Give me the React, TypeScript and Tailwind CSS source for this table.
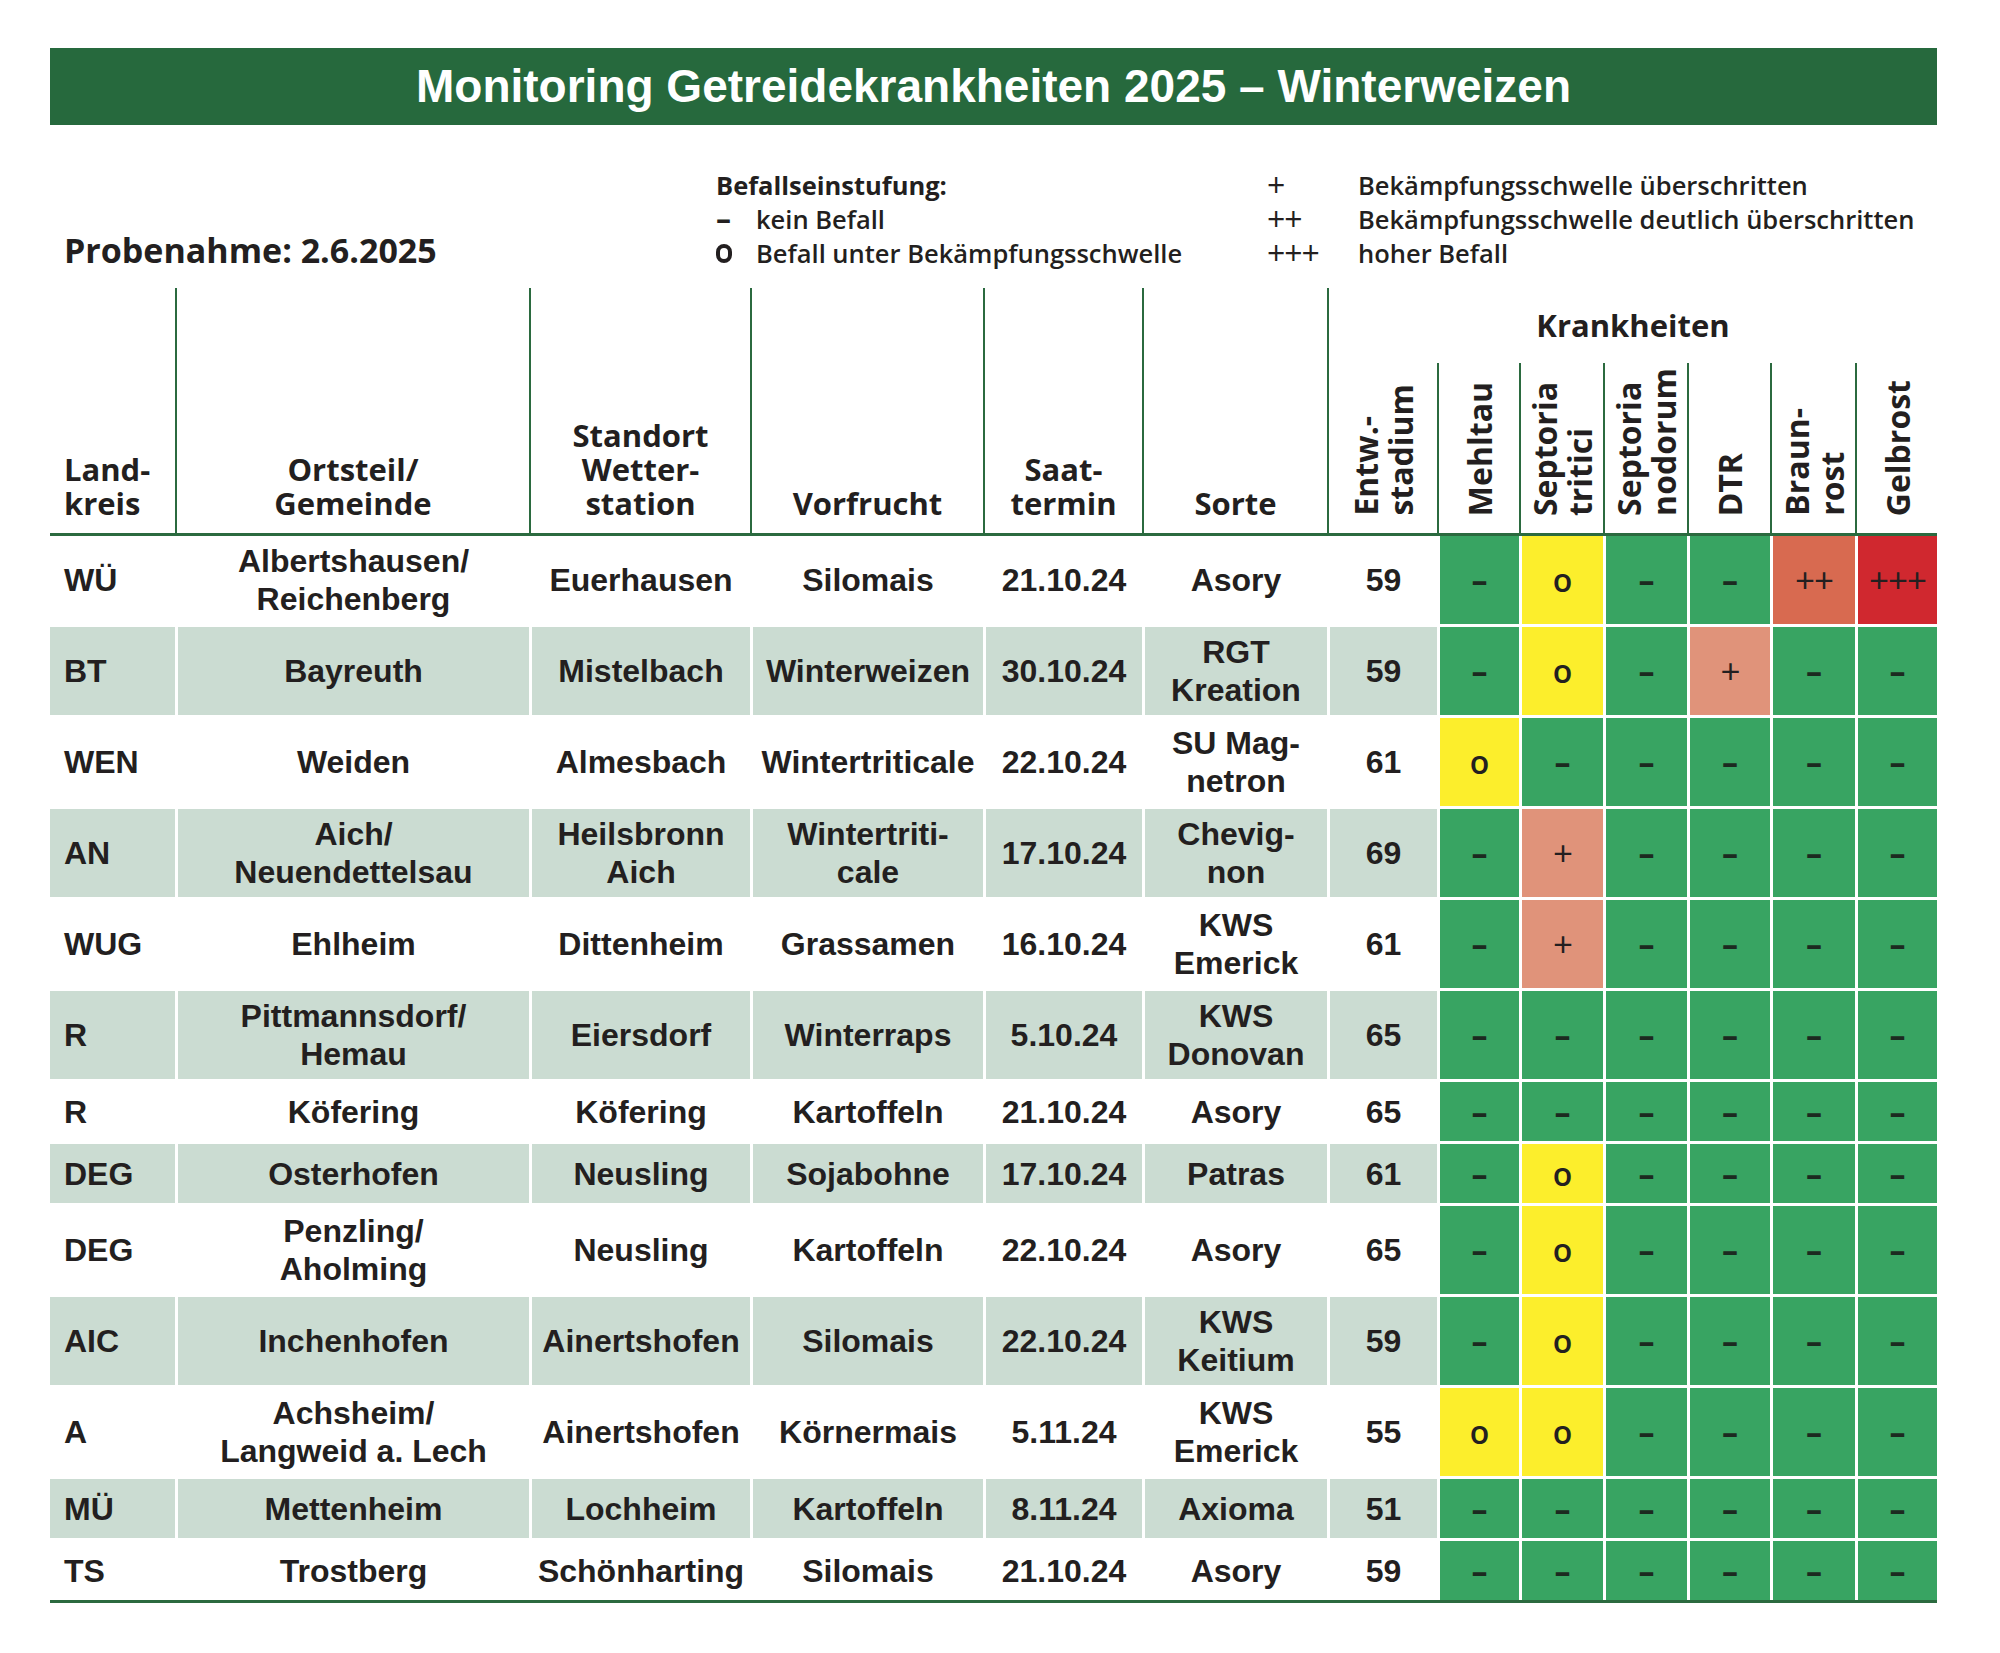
import React from 'react';

const LIB = "[font-family:'Liberation_Sans',Arial,sans-serif]";
const OS = "[font-family:'Open_Sans',sans-serif]";

// column widths, left to right (border-box, left border included)
const W = [
  'w-[125px]',
  'w-[354px]',
  'w-[221px]',
  'w-[233px]',
  'w-[159px]',
  'w-[185px]',
  'w-[110px]',
  'w-[82px]',
  'w-[84px]',
  'w-[84px]',
  'w-[83px]',
  'w-[85px]',
  'w-[82px]',
];

type Row = {
  lk: string;
  ort: string;
  st: string;
  vf: string;
  saat: string;
  sorte: string;
  entw: string;
  d: string[];
  tall: boolean;
};

const none = ['-', '-', '-', '-', '-', '-'];

const rows: Row[] = [
  { lk: 'WÜ', ort: 'Albertshausen/|Reichenberg', st: 'Euerhausen', vf: 'Silomais', saat: '21.10.24', sorte: 'Asory', entw: '59', d: ['-', 'o', '-', '-', '++', '+++'], tall: true },
  { lk: 'BT', ort: 'Bayreuth', st: 'Mistelbach', vf: 'Winterweizen', saat: '30.10.24', sorte: 'RGT|Kreation', entw: '59', d: ['-', 'o', '-', '+', '-', '-'], tall: true },
  { lk: 'WEN', ort: 'Weiden', st: 'Almesbach', vf: 'Wintertriticale', saat: '22.10.24', sorte: 'SU Mag-|netron', entw: '61', d: ['o', '-', '-', '-', '-', '-'], tall: true },
  { lk: 'AN', ort: 'Aich/|Neuendettelsau', st: 'Heilsbronn|Aich', vf: 'Wintertriti-|cale', saat: '17.10.24', sorte: 'Chevig-|non', entw: '69', d: ['-', '+', '-', '-', '-', '-'], tall: true },
  { lk: 'WUG', ort: 'Ehlheim', st: 'Dittenheim', vf: 'Grassamen', saat: '16.10.24', sorte: 'KWS|Emerick', entw: '61', d: ['-', '+', '-', '-', '-', '-'], tall: true },
  { lk: 'R', ort: 'Pittmannsdorf/|Hemau', st: 'Eiersdorf', vf: 'Winterraps', saat: '5.10.24', sorte: 'KWS|Donovan', entw: '65', d: none, tall: true },
  { lk: 'R', ort: 'Köfering', st: 'Köfering', vf: 'Kartoffeln', saat: '21.10.24', sorte: 'Asory', entw: '65', d: none, tall: false },
  { lk: 'DEG', ort: 'Osterhofen', st: 'Neusling', vf: 'Sojabohne', saat: '17.10.24', sorte: 'Patras', entw: '61', d: ['-', 'o', '-', '-', '-', '-'], tall: false },
  { lk: 'DEG', ort: 'Penzling/|Aholming', st: 'Neusling', vf: 'Kartoffeln', saat: '22.10.24', sorte: 'Asory', entw: '65', d: ['-', 'o', '-', '-', '-', '-'], tall: true },
  { lk: 'AIC', ort: 'Inchenhofen', st: 'Ainertshofen', vf: 'Silomais', saat: '22.10.24', sorte: 'KWS|Keitium', entw: '59', d: ['-', 'o', '-', '-', '-', '-'], tall: true },
  { lk: 'A', ort: 'Achsheim/|Langweid a. Lech', st: 'Ainertshofen', vf: 'Körnermais', saat: '5.11.24', sorte: 'KWS|Emerick', entw: '55', d: ['o', 'o', '-', '-', '-', '-'], tall: true },
  { lk: 'MÜ', ort: 'Mettenheim', st: 'Lochheim', vf: 'Kartoffeln', saat: '8.11.24', sorte: 'Axioma', entw: '51', d: none, tall: false },
  { lk: 'TS', ort: 'Trostberg', st: 'Schönharting', vf: 'Silomais', saat: '21.10.24', sorte: 'Asory', entw: '59', d: none, tall: false },
];

const cellColor: Record<string, string> = {
  '-': 'bg-[#38a462]',
  o: 'bg-[#fcee2c]',
  '+': 'bg-[#e0937a]',
  '++': 'bg-[#d86a50]',
  '+++': 'bg-[#d0282f]',
};

const Lines = ({ text }: { text: string }) => (
  <>
    {text.split('|').map((l, i) => (
      <div key={i} className="whitespace-nowrap">
        {l}
      </div>
    ))}
  </>
);

const HeadCell = ({ w, text }: { w: string; text: string }) => (
  <div className={`${w} border-l-2 border-[#2b6a3f] flex items-end justify-center pb-[13px] text-center leading-[34px]`}>
    <div>
      <Lines text={text} />
    </div>
  </div>
);

const RotCell = ({ w, text, first }: { w: string; text: string; first?: boolean }) => (
  <div
    className={`${w} ${first ? '' : 'border-l-2 border-[#2b6a3f]'} flex items-end justify-center pb-[17px]`}
  >
    <div className="[writing-mode:vertical-rl] rotate-180 text-left leading-[35px] text-[32px]">
      <Lines text={text} />
    </div>
  </div>
);

const Symbol = ({ v }: { v: string }) => {
  if (v === '-') return <span className="font-bold text-[#1c2a20]">–</span>;
  if (v === 'o') return <span className="font-semibold">o</span>;
  return <span className="font-normal text-[35px] tracking-[-1px]">{v}</span>;
};

export default function App() {
  return (
    <div className="min-h-[1653px] w-[2000px] bg-white text-[#231f20]">
      <div className="ml-[50px] w-[1887px] pt-[48px]">
        {/* Titel */}
        <div className={`h-[77px] bg-[#26693d] flex items-center justify-center text-white font-bold text-[46px] ${LIB}`}>
          Monitoring Getreidekrankheiten 2025 – Winterweizen
        </div>

        {/* Probenahme + Legende */}
        <div className="flex h-[163px] items-end pb-[18px]">
          <div className={`w-[666px] pl-[14px] font-bold text-[34px] leading-[40px] ${OS}`}>
            Probenahme: 2.6.2025
          </div>
          <div className={`w-[551px] text-[25.5px] font-semibold leading-[34px] ${OS}`}>
            <div className="font-bold">Befallseinstufung:</div>
            <div className="flex items-center h-[34px]">
              <span className="w-[40px] font-bold text-[30px]">–</span>
              <span>kein Befall</span>
            </div>
            <div className="flex items-center h-[34px]">
              <span className="w-[40px] flex items-center">
                <span className="inline-block w-[16px] h-[19px] rounded-full border-[4px] border-[#231f20]" />
              </span>
              <span>Befall unter Bekämpfungsschwelle</span>
            </div>
          </div>
          <div className={`text-[25.5px] font-semibold leading-[34px] ${OS}`}>
            <div className="flex items-center h-[34px]">
              <span className="w-[91px] font-normal text-[32px] tracking-[-1px]">+</span>
              <span>Bekämpfungsschwelle überschritten</span>
            </div>
            <div className="flex items-center h-[34px]">
              <span className="w-[91px] font-normal text-[32px] tracking-[-1px]">++</span>
              <span>Bekämpfungsschwelle deutlich überschritten</span>
            </div>
            <div className="flex items-center h-[34px]">
              <span className="w-[91px] font-normal text-[32px] tracking-[-1px]">+++</span>
              <span>hoher Befall</span>
            </div>
          </div>
        </div>

        {/* Kopfzeile */}
        <div className={`flex h-[248px] border-b-[3px] border-[#2b6a3f] font-bold text-[31px] ${OS}`}>
          <div className={`${W[0]} flex items-end pl-[14px] pb-[13px] leading-[34px]`}>
            <div>
              <div>Land-</div>
              <div>kreis</div>
            </div>
          </div>
          <HeadCell w={W[1]} text="Ortsteil/|Gemeinde" />
          <HeadCell w={W[2]} text="Standort|Wetter-|station" />
          <HeadCell w={W[3]} text="Vorfrucht" />
          <HeadCell w={W[4]} text="Saat-|termin" />
          <HeadCell w={W[5]} text="Sorte" />
          <div className="w-[610px] border-l-2 border-[#2b6a3f] flex flex-col">
            <div className="h-[75px] flex items-center justify-center">Krankheiten</div>
            <div className="flex flex-1">
              <RotCell w="w-[108px]" text="Entw.-|stadium" first />
              <RotCell w={W[7]} text="Mehltau" />
              <RotCell w={W[8]} text="Septoria|tritici" />
              <RotCell w={W[9]} text="Septoria|nodorum" />
              <RotCell w={W[10]} text="DTR" />
              <RotCell w={W[11]} text="Braun-|rost" />
              <RotCell w={W[12]} text="Gelbrost" />
            </div>
          </div>
        </div>

        {/* Zeilen */}
        <div>
          {rows.map((r, i) => {
            const shade = i % 2 === 1 ? 'bg-[#cbdcd2]' : 'bg-white';
            const text = [r.ort, r.st, r.vf, r.saat, r.sorte, r.entw];
            return (
              <div
                key={i}
                className={`flex ${r.tall ? 'h-[88px]' : 'h-[59px]'} ${i > 0 ? 'mt-[3px]' : ''}`}
              >
                <div className={`${W[0]} ${shade} flex items-center pl-[14px] font-bold text-[32px] ${LIB}`}>
                  {r.lk}
                </div>
                {text.map((t, j) => (
                  <div
                    key={j}
                    className={`${W[j + 1]} ${shade} border-l-[3px] border-white flex items-center justify-center text-center font-bold text-[32px] leading-[38px] ${LIB}`}
                  >
                    <div>
                      <Lines text={t} />
                    </div>
                  </div>
                ))}
                {r.d.map((v, k) => (
                  <div
                    key={k}
                    className={`${W[k + 7]} ${cellColor[v]} border-l-[3px] border-white flex items-center justify-center text-[32px] ${OS}`}
                  >
                    <Symbol v={v} />
                  </div>
                ))}
              </div>
            );
          })}
        </div>
        <div className="h-[3px] bg-[#2b6a3f]" />
      </div>
    </div>
  );
}
